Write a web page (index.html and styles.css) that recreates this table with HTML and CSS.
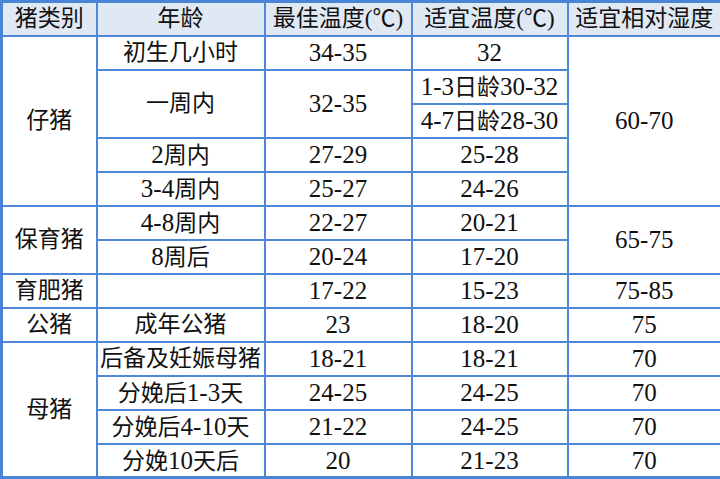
FILE: index.html
```html
<!DOCTYPE html>
<html lang="zh-CN">
<head>
<meta charset="utf-8">
<title>猪舍温湿度</title>
<link rel="stylesheet" href="styles.css">
</head>
<body>
<table class="grid">
  <colgroup>
    <col class="c1"><col class="c2"><col class="c3"><col class="c4"><col class="c5">
  </colgroup>
  <thead>
    <tr class="head">
      <th>猪类别</th><th>年龄</th><th>最佳温度(℃)</th><th>适宜温度(℃)</th><th>适宜相对湿度</th>
    </tr>
  </thead>
  <tbody>
    <tr><td rowspan="5">仔猪</td><td>初生几小时</td><td class="n">34-35</td><td class="n">32</td><td rowspan="5" class="n">60-70</td></tr>
    <tr><td rowspan="2">一周内</td><td rowspan="2" class="n">32-35</td><td><span class="n">1-3</span>日龄<span class="n">30-32</span></td></tr>
    <tr><td><span class="n">4-7</span>日龄<span class="n">28-30</span></td></tr>
    <tr><td><span class="n">2</span>周内</td><td class="n">27-29</td><td class="n">25-28</td></tr>
    <tr><td><span class="n">3-4</span>周内</td><td class="n">25-27</td><td class="n">24-26</td></tr>
    <tr><td rowspan="2">保育猪</td><td><span class="n">4-8</span>周内</td><td class="n">22-27</td><td class="n">20-21</td><td rowspan="2" class="n">65-75</td></tr>
    <tr><td><span class="n">8</span>周后</td><td class="n">20-24</td><td class="n">17-20</td></tr>
    <tr><td>育肥猪</td><td></td><td class="n">17-22</td><td class="n">15-23</td><td class="n">75-85</td></tr>
    <tr><td>公猪</td><td>成年公猪</td><td class="n">23</td><td class="n">18-20</td><td class="n">75</td></tr>
    <tr><td rowspan="4">母猪</td><td>后备及妊娠母猪</td><td class="n">18-21</td><td class="n">18-21</td><td class="n">70</td></tr>
    <tr><td>分娩后<span class="n">1-3</span>天</td><td class="n">24-25</td><td class="n">24-25</td><td class="n">70</td></tr>
    <tr><td>分娩后<span class="n">4-10</span>天</td><td class="n">21-22</td><td class="n">24-25</td><td class="n">70</td></tr>
    <tr><td>分娩<span class="n">10</span>天后</td><td class="n">20</td><td class="n">21-23</td><td class="n">70</td></tr>
  </tbody>
</table>
</body>
</html>
```

FILE: styles.css
```css
html, body {
  margin: 0;
  padding: 0;
  background: #ffffff;
}

.grid {
  width: 720px;
  height: 479px;
  border-collapse: collapse;
  table-layout: fixed;
  font-family: "Liberation Serif", "Noto Sans CJK SC", serif;
  font-size: 23px;
  color: #111111;
  border: 3px solid #4a84d6;
}

.c1 { width: 95px; }
.c2 { width: 168px; }
.c3 { width: 147px; }
.c4 { width: 156px; }
.c5 { width: 154px; }

.grid th,
.grid td {
  border: 2px solid #4f88da;
  padding: 0;
  text-align: center;
  vertical-align: middle;
  line-height: 1;
  white-space: nowrap;
  font-weight: normal;
}

.grid .n {
  font-size: 25px;
}

.grid tr {
  height: 34px;
}

.head th {
  background: #dfe8f3;
}
```
